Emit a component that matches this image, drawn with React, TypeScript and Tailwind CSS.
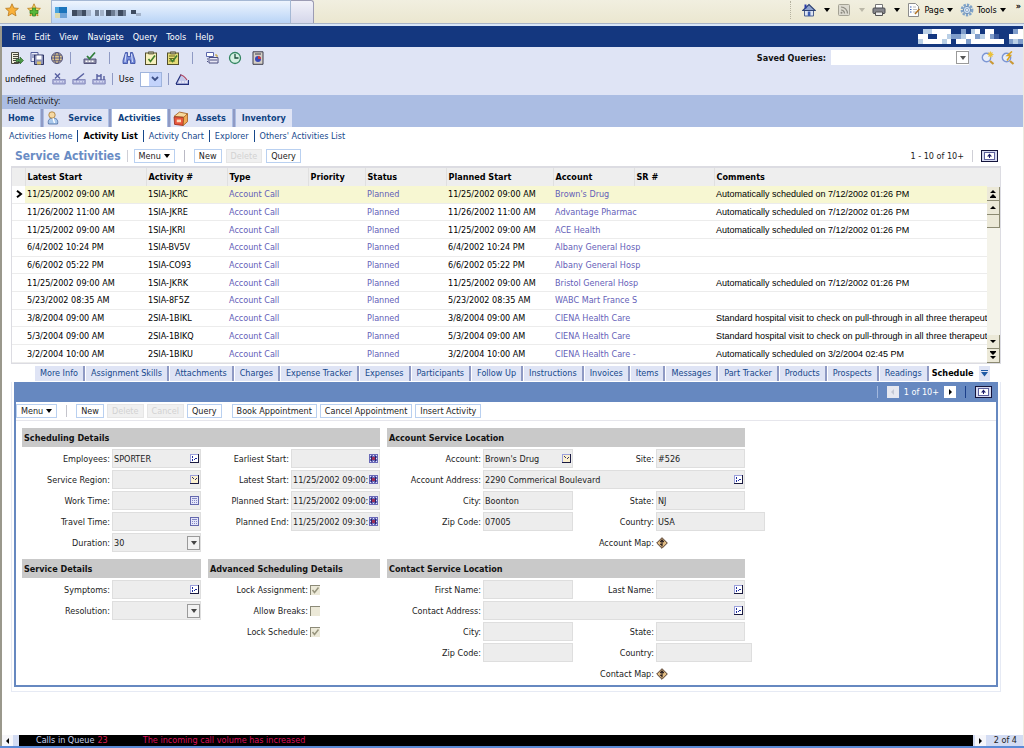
import { useId, type ReactNode } from 'react';
import clsx from 'clsx';

const ACTIVITIES = [
  ['11/25/2002 09:00 AM', '1SIA-JKRC', "Brown's Drug", 'Automatically scheduled on 7/12/2002 01:26 PM'],
  ['11/26/2002 11:00 AM', '1SIA-JKRE', 'Advantage Pharmac', 'Automatically scheduled on 7/12/2002 01:26 PM'],
  ['11/25/2002 09:00 AM', '1SIA-JKRI', 'ACE Health', 'Automatically scheduled on 7/12/2002 01:26 PM'],
  ['6/4/2002 10:24 PM', '1SIA-BV5V', 'Albany General Hosp', ''],
  ['6/6/2002 05:22 PM', '1SIA-CO93', 'Albany General Hosp', ''],
  ['11/25/2002 09:00 AM', '1SIA-JKRK', 'Bristol General Hosp', 'Automatically scheduled on 7/12/2002 01:26 PM'],
  ['5/23/2002 08:35 AM', '1SIA-8F5Z', 'WABC Mart France S', ''],
  ['3/8/2004 09:00 AM', '2SIA-1BIKL', 'CIENA Health Care', 'Standard hospital visit to check on pull-through in all three therapeutic'],
  ['5/3/2004 09:00 AM', '2SIA-1BIKQ', 'CIENA Health Care', 'Standard hospital visit to check on pull-through in all three therapeutic'],
  ['3/2/2004 10:00 AM', '2SIA-1BIKU', 'CIENA Health Care -', 'Automatically scheduled on 3/2/2004 02:45 PM'],
];

const VIEW_TABS = [
  'More Info', 'Assignment Skills', 'Attachments', 'Charges', 'Expense Tracker', 'Expenses', 'Participants',
  'Follow Up', 'Instructions', 'Invoices', 'Items', 'Messages', 'Part Tracker', 'Products', 'Prospects', 'Readings',
];

// one character per 5px cell: W white, L light, M mid, D dark blue
const LOGO = [
  '.LLWWWW..M.LW.WW....MW',
  'WW..WWLMMLWWMLWMD..WWW',
  'LWWWWLW.WWMWWWWWWW.MLM',
];
const LOGO_COLORS: Record<string, string> = { W: '#ffffff', L: '#b9cfe6', M: '#7f9dcb', D: '#3d5c9e' };

function Logo() {
  return (
    <svg width="105" height="15" viewBox="0 0 110 15" preserveAspectRatio="none" shapeRendering="crispEdges" aria-label="Logo">
      {LOGO.map((row, y) =>
        [...row].map((c, x) =>
          LOGO_COLORS[c] ? <rect key={`${x}-${y}`} x={x * 5} y={y * 5} width="5" height="5" fill={LOGO_COLORS[c]} /> : null,
        ),
      )}
    </svg>
  );
}

function Icon({ children, size = 14 }: { children: ReactNode; size?: number }) {
  return (
    <svg width={size} height={size} viewBox="0 0 14 14" fill="none" className="block shrink-0" aria-hidden="true">
      {children}
    </svg>
  );
}

const Star = ({ plus = false }: { plus?: boolean }) => (
  <Icon>
    <path d="M7 .8 8.9 5l4.5.4L10 8.4l1 4.500-4-2.400-4 2.400 1-4.500L.6 5.400 5.100 5z" fill={plus ? '#f8dc62' : '#f9b13a'} stroke="#b9791c" strokeWidth=".8" />
    {plus && <path d="M5.500 5h3v2.500H11v3H8.500V13h-3v-2.500H3v-3h2.500z" fill="#58b83c" stroke="#2c7d20" strokeWidth=".7" />}
  </Icon>
);
const HomeIcon = () => (
  <Icon>
    <path d="M2.500 6.500v6.500h9V6.500" fill="#dbe3f3" stroke="#4d608f" />
    <path d="M.8 7.500 7 1.500l6.200 6z" fill="#8fa3cf" stroke="#2e4274" strokeWidth="1.100" />
    <path d="M2.500 1.500h2v4h-2z" fill="#2b3da8" />
    <path d="M5.800 8.500h2.600V13H5.800z" fill="#3c5cb0" />
  </Icon>
);
const FeedIcon = () => (
  <Icon>
    <rect x="1.500" y="1.500" width="11" height="11" rx="1" fill="#dcdad0" stroke="#a4a294" />
    <path d="M4 7a3.500 3.500 0 0 1 3.500 3.500M4 4a6.500 6.500 0 0 1 6.500 6.500" stroke="#8c8a80" strokeWidth="1.200" />
    <circle cx="4.500" cy="9.800" r="1" fill="#8c8a80" />
  </Icon>
);
const PrinterIcon = () => (
  <Icon>
    <path d="M3.500 1.500h7v4h-7z" fill="#fff" stroke="#777" />
    <rect x="1" y="5" width="12" height="5.500" rx="1" fill="#85868c" stroke="#4a4b50" />
    <path d="M3.500 9h7v3.500h-7z" fill="#eee" stroke="#555" />
  </Icon>
);
const PageIcon = () => (
  <Icon>
    <path d="M1.500.5h7l3 3v10h-10z" fill="#fdfdfd" stroke="#8c8c8c" />
    <path d="M3 4h1.500M3 6.500h1.500M3 9h1.500" stroke="#3660b8" />
    <path d="M6 4h3M6 6.500h4M6 9h3" stroke="#bbb" />
    <path d="m8 11 4.500-5" stroke="#b57322" strokeWidth="1.500" />
  </Icon>
);
const GearIcon = () => (
  <Icon>
    <circle cx="7" cy="7" r="5.200" stroke="#7fa3c9" strokeWidth="2.400" strokeDasharray="2.300 1.100" />
    <circle cx="7" cy="7" r="3.700" fill="#cfe0f2" stroke="#6c8fb8" />
    <circle cx="7" cy="7" r="1.500" fill="#fff" stroke="#6c8fb8" strokeWidth=".7" />
  </Icon>
);
const ScriptIcon = () => (
  <Icon>
    <path d="M1.500 1.500h7v11h-7z" fill="#f1efdc" stroke="#4a4a40" />
    <path d="M3 3.500h5M3 5.500h5M3 7.500h5M3 9.500h5M4 11.500h6" stroke="#33332a" strokeWidth=".9" />
    <path d="M6 8.500h4V6l3.500 3.500L10 13v-2.500H6z" fill="#4e9a48" stroke="#1f5a22" strokeWidth=".6" />
  </Icon>
);
const CopyIcon = () => (
  <Icon>
    <path d="M1 1.500h7v9H1z" fill="#eceef8" stroke="#56619e" />
    <path d="M2 4h3M2 6h2" stroke="#56619e" />
    <path d="M4.500 4h9v9.500h-9z" fill="#8d92b8" stroke="#2f3565" />
    <path d="M6.500 4.500h5v4h-5z" fill="#fff" />
    <path d="M7 10.500h4v3H7z" fill="#d8c068" />
  </Icon>
);
const GlobeIcon = () => (
  <Icon>
    <circle cx="7" cy="7" r="5.500" fill="#e0c68c" stroke="#4b4f80" />
    <ellipse cx="7" cy="7" rx="2.500" ry="5.500" stroke="#4b4f80" strokeWidth=".9" />
    <path d="M1.500 7h11M2.500 4.200h9M2.500 9.800h9" stroke="#4b4f80" strokeWidth=".9" />
  </Icon>
);
const CheckCardIcon = () => (
  <Icon>
    <path d="M1 8h12v4.500H1z" fill="#8b8ba4" stroke="#55557d" />
    <path d="M2.500 10.300h9" stroke="#fff" strokeWidth="1.400" strokeDasharray="2 1" />
    <path d="m4 5 2.500 2.700L12 1.500" stroke="#2f7d3a" strokeWidth="1.700" />
  </Icon>
);
const BinocularsIcon = () => (
  <Icon>
    <path d="M3.500 1.500h2v4h3v-4h2l2.500 8v3H8.500V9h-3v3.500H1v-3z" fill="#7389d8" stroke="#3448a0" strokeWidth=".8" />
    <path d="M4 3 3 11M9.500 3l1 8" stroke="#dbe3fc" />
  </Icon>
);
const ClipboardIcon = ({ lines = false }: { lines?: boolean }) => (
  <Icon>
    <rect x="1.500" y="2" width="11" height="11.500" fill={lines ? '#e4dc78' : '#f7f1be'} stroke="#54502c" />
    <path d="M4.500.8h5V3h-5z" fill="#9b9a84" stroke="#54502c" strokeWidth=".7" />
    {lines && <path d="M3 5h6M3 7.500h5M3 10h6" stroke="#6d681e" />}
    <path d="m4.500 8 2 2.500L11 4.500" stroke="#3f7d2a" strokeWidth="1.600" />
  </Icon>
);
const FaxIcon = () => (
  <Icon>
    <path d="M1.500 1.500h7v4h-7z" fill="#fff" stroke="#5a66ac" />
    <path d="M4 6.500h9v5.500H4z" fill="#e7e6f4" stroke="#4a4f80" />
    <path d="M5 9h7M2 8h1M2 10.500h1" stroke="#4a4f80" />
    <path d="M10 4h2v2" stroke="#c09c30" />
  </Icon>
);
const ClockIcon = () => (
  <Icon>
    <circle cx="7" cy="7" r="5.500" fill="#d5f0e2" stroke="#338561" strokeWidth="1.300" />
    <path d="M7 3v4h3.500" stroke="#1c4d3c" strokeWidth="1.300" />
  </Icon>
);
const ReportIcon = () => (
  <Icon>
    <path d="M2 .8h10v12.500H2z" fill="#d5cfc6" stroke="#3d3d4d" />
    <path d="M4 3h6" stroke="#3d3d4d" />
    <circle cx="7" cy="8" r="3" fill="#3a49b5" />
    <path d="M7 8V5a3 3 0 0 1 3 3z" fill="#d03c3c" />
  </Icon>
);
const KeysIcon = ({ d }: { d: string }) => (
  <Icon>
    <path d="M.8 7.500h12.400v4.500H.8z" fill="#a9add6" stroke="#8a8fc0" />
    <path d="M2 9.800h10" stroke="#e6e8fa" strokeDasharray="2 1" />
    <path d={d} stroke="#565ea0" strokeWidth="1.400" />
  </Icon>
);
const SlopeIcon = () => (
  <Icon>
    <path d="M1 12 6.500 2l1 2.500 5.500 5V12z" fill="#c4c8ea" />
    <path d="M1 12.300h12.500V8M1 12 6 2.500" stroke="#23307c" strokeWidth="1.200" />
    <path d="M5 3c3 0 5 2 7 5" stroke="#b04560" strokeWidth="1.200" />
    <path d="M4 10h8" stroke="#fff" strokeDasharray="2 1" />
  </Icon>
);
const SearchIcon = ({ bolt = false }: { bolt?: boolean }) => (
  <Icon>
    <circle cx="5.500" cy="6.500" r="4.200" fill="#e9effb" stroke="#7c96d4" strokeWidth="1.400" />
    <path d="m9 10 3.500 3" stroke="#c99836" strokeWidth="2.200" />
    {bolt ? (
      <path d="M11 .5 6.500 4.500h3L6 9.500" stroke="#dba51f" strokeWidth="1.600" />
    ) : (
      <path d="M9.500.5v6M6.500 3.500h6M7.500 1.500l4 4m0-4-4 4" stroke="#eac13c" strokeWidth="1.100" />
    )}
  </Icon>
);
const PersonIcon = () => (
  <Icon>
    <path d="M2.500 13c-1-4 1-6 4.500-6s5.500 2 4.500 6z" fill="#a9c8ec" stroke="#47689e" strokeWidth=".8" />
    <circle cx="6" cy="4" r="3.200" fill="#f6d9a4" stroke="#a5762f" strokeWidth=".8" />
    <path d="m7 7 1.500 5" stroke="#fff" strokeWidth="1.300" />
  </Icon>
);
const CrateIcon = () => (
  <Icon size={15}>
    <path d="m1 5 5-4 7.500 1.500L12 6z" fill="#f7d89c" stroke="#a35f22" strokeWidth=".8" />
    <path d="M1 5.500 10 6l-.5 7.500-8-1z" fill="#e8553c" stroke="#9c2f1c" strokeWidth=".8" />
    <path d="m10 6 3.500-3.500V10l-4 3.500z" fill="#f2ae58" stroke="#a35f22" strokeWidth=".8" />
    <path d="M3.500 8h4v2.500h-4z" fill="#fbd9b8" />
  </Icon>
);

function Caret({ className = 'text-black' }: { className?: string }) {
  return (
    <svg width="6" height="4" viewBox="0 0 6 4" className={clsx('inline-block shrink-0', className)} aria-hidden="true">
      <path d="M0 0h6L3 4z" fill="currentColor" />
    </svg>
  );
}

function ToolButton({ label, children }: { label: string; children: ReactNode }) {
  return (
    <button type="button" aria-label={label} className="block">
      {children}
    </button>
  );
}

const Divider = ({ className = 'bg-[#8f9ac4]' }: { className?: string }) => <span className={clsx('h-3 w-px shrink-0', className)} />;

function Button({ children, disabled = false }: { children: ReactNode; disabled?: boolean }) {
  return (
    <button
      type="button"
      disabled={disabled}
      className={clsx(
        'flex h-[14px] items-center gap-[3px] border px-1 leading-[12px] whitespace-nowrap',
        disabled ? 'border-[#e6e6e6] bg-[#f0f0f0] text-[#d2d2d2]' : 'border-[#b9d0f0] bg-white text-[#222]',
      )}
    >
      {children}
    </button>
  );
}

function ExpandButton() {
  return (
    <button type="button" aria-label="Expand" className="grid h-3 w-[17px] place-items-center border border-[#14143c] bg-[#d6daf0]">
      <svg width="11" height="8" viewBox="0 0 11 8" aria-hidden="true">
        <rect x=".5" y=".5" width="10" height="7" fill="#fff" stroke="#5c5f9c" />
        <path d="M5.500 1.500 8 4.500H6V6H5V4.500H3z" fill="#1e1e6a" />
      </svg>
    </button>
  );
}

type FieldIcon = 'pick' | 'mvg' | 'calc' | 'cal';

function FieldGlyph({ kind }: { kind: FieldIcon }) {
  if (kind === 'cal') {
    return (
      <svg width="9" height="9" viewBox="0 0 9 9" className="block" shapeRendering="crispEdges" aria-hidden="true">
        <rect width="9" height="9" fill="#6a6ab8" />
        <path d="M1 1h1v1H1zM4 1h1v1H4zM7 1h1v1H7zM1 4h1v1H1zM7 4h1v1H7zM1 7h1v1H1zM4 7h1v1H4zM7 7h1v1H7z" fill="#e4e4fa" />
        <path d="M2 2h1v5H2zM6 2h1v5H6z" fill="#24246e" />
        <path d="M3 3h3v3H3z" fill="#a03058" />
      </svg>
    );
  }
  if (kind === 'calc') {
    return (
      <svg width="9" height="9" viewBox="0 0 9 9" className="block" aria-hidden="true">
        <rect x=".5" y=".5" width="8" height="8" fill="#e4e6fa" stroke="#6468ae" />
        <path d="M2 2.500h5M2 4.500h1m1 0h1m1 0h1M2 6.500h1m1 0h1m1 0h1" stroke="#8387c4" />
      </svg>
    );
  }
  return (
    <svg width="9" height="9" viewBox="0 0 9 9" className="block" shapeRendering="crispEdges" aria-hidden="true">
      <rect width="9" height="9" fill="#9ba0dc" />
      <rect x="1" y="1" width="7" height="7" fill={kind === 'pick' ? '#fbf0cf' : '#fff'} />
      <path d="M0 8h9v1H0zM8 0h1v9H8z" fill="#1b1b40" />
      {kind === 'pick' ? (
        <path d="M2 2h1v1H2zM3 3h1v1H3zM5 4h1v1H5zM6 3h1v1H6z" fill="#33336c" />
      ) : (
        <path d="M2 2h1v2H2zM2 5h1v2H2zM4 5h1v1H4zM5 4h2v1H5z" fill="#1f2ea0" />
      )}
    </svg>
  );
}

interface FieldProps {
  label: string;
  value?: string;
  icon?: FieldIcon;
  select?: boolean;
  className?: string;
}

function Field({ label, value = '', icon, select = false, className }: FieldProps) {
  const id = useId();
  return (
    <>
      <label htmlFor={id} className="pr-[2px] text-right whitespace-nowrap">
        {label}:
      </label>
      <div className={clsx('relative flex h-[19px] items-center border border-[#dedede] bg-[#ededed]', className)}>
        {select ? (
          <>
            <select id={id} defaultValue={value} className="h-full w-full appearance-none bg-transparent pl-px">
              <option>{value}</option>
            </select>
            <span className="pointer-events-none absolute right-0 grid h-[14px] w-[13px] place-items-center border border-[#9a9a9a] bg-[#f2f2f2]">
              <Caret className="text-[#444]" />
            </span>
          </>
        ) : (
          <input id={id} defaultValue={value} className="h-full w-full min-w-0 flex-1 bg-transparent pl-px outline-none" />
        )}
        {icon && (
          <button type="button" aria-label={`Choose ${label}`} className="mr-px shrink-0">
            <FieldGlyph kind={icon} />
          </button>
        )}
      </div>
    </>
  );
}

function MapField({ label }: { label: string }) {
  const id = useId();
  return (
    <>
      <label htmlFor={id} className="col-start-3 pr-[2px] text-right whitespace-nowrap">
        {label}:
      </label>
      <button id={id} type="button" aria-label={label} className="w-3">
        <svg width="12" height="12" viewBox="0 0 12 12" className="block" aria-hidden="true">
          <path d="m6 .7 5.300 5.300L6 11.300.7 6z" fill="#e2bd84" stroke="#4a3528" />
          <path d="M6 9.500v-6M4.200 5 6 3l1.800 2M4 7l2 1" stroke="#2c2020" strokeWidth="1.200" fill="none" />
        </svg>
      </button>
    </>
  );
}

function CheckField({ label, checked = false }: { label: string; checked?: boolean }) {
  const id = useId();
  return (
    <div className="grid h-[21px] grid-cols-[100px_1fr] items-center gap-x-[2px]">
      <label htmlFor={id} className="text-right whitespace-nowrap">
        {label}:
      </label>
      <span className="relative h-[10px] w-[10px]">
        <input
          id={id}
          type="checkbox"
          disabled
          defaultChecked={checked}
          className="block h-[10px] w-[10px] appearance-none border-t border-l border-[#8c8a78] bg-[#ece9d8]"
        />
        {checked && (
          <svg viewBox="0 0 10 10" className="pointer-events-none absolute inset-0" aria-hidden="true">
            <path d="m2.500 5 2 2.500L8.500 2.500" stroke="#98957e" strokeWidth="1.500" fill="none" />
          </svg>
        )}
      </span>
    </div>
  );
}

const SectionTitle = ({ children }: { children: ReactNode }) => (
  <h3 className="mb-px flex h-[19px] items-center bg-[#c9c9c9] pl-[2px] font-bold text-[#111]">{children}</h3>
);

function BrowserBar() {
  return (
    <div className="flex h-[23px] items-stretch bg-gradient-to-b from-[#f1efe0] to-[#ebe7d0]">
      <div className="flex w-[51px] items-start gap-2 pt-[3px] pl-[5px]">
        <ToolButton label="Favorites"><Star /></ToolButton>
        <ToolButton label="Add favorite"><Star plus /></ToolButton>
      </div>
      <div className="flex w-[240px] items-center border-x border-t border-[#a5b8d4] bg-gradient-to-b from-[#eef5fe] to-[#b9d4f6] pl-[3px]">
        <svg width="110" height="14" viewBox="0 0 110 14" shapeRendering="crispEdges" aria-hidden="true">
          <path d="M0 2h9v6H0z" fill="#4aa5de" />
          <path d="M4 2h8v6H4z" fill="#1b74bc" />
          <path d="M0 8h5v5H0z" fill="#d9d9b0" />
          <path d="M5 8h7v5H5z" fill="#6fa3d8" />
          <path d="M17 5h5v6h-5zM27 5h4v6h-4zM51 5h5v6h-5zM63 5h5v6h-5zM76 5h5v4h-5z" fill="#3f4c60" />
          <path d="M22 5h5v6h-5zM40 5h4v6h-4zM56 5h4v6h-4zM68 5h3v6h-3z" fill="#6d7c92" />
          <path d="M31 5h5v6h-5zM45 5h4v6h-4zM60 5h3v6h-3zM81 8h5v3h-5z" fill="#a3b3ca" />
        </svg>
      </div>
      <div className="w-[23px] rounded-tr-[3px] border-t border-r border-[#9c9cb4] bg-gradient-to-b from-[#f2f2fa] to-[#d5d7ea]" />
      <div className="ml-auto flex items-center gap-[7px] pr-[3px] pb-[3px] text-black">
        <span className="h-[18px] border-l border-dotted border-[#b5b2a0]" />
        <div className="flex items-center gap-2 pl-1"><ToolButton label="Home page"><HomeIcon /></ToolButton><Caret /></div>
        <div className="flex items-center gap-2"><ToolButton label="Feeds"><FeedIcon /></ToolButton><Caret className="text-[#bbb8a8]" /></div>
        <div className="flex items-center gap-2"><ToolButton label="Print"><PrinterIcon /></ToolButton><Caret /></div>
        <button type="button" className="flex items-center gap-[3px]"><PageIcon />Page<Caret /></button>
        <button type="button" className="flex items-center gap-[3px]"><GearIcon />Tools<Caret /></button>
        <span className="self-start pl-[3px] font-bold">»</span>
      </div>
    </div>
  );
}

function Toolbars() {
  return (
    <div className="flex h-12 justify-between bg-[#dfe4f5]">
      <div>
        <div className="flex h-[22px] items-center gap-[6px] pl-2">
          <ToolButton label="Script"><ScriptIcon /></ToolButton>
          <ToolButton label="Copy"><CopyIcon /></ToolButton>
          <ToolButton label="Web"><GlobeIcon /></ToolButton>
          <Divider />
          <div className="px-[6px]"><ToolButton label="Spelling"><CheckCardIcon /></ToolButton></div>
          <Divider />
          <div className="flex gap-2 px-[6px]">
            <ToolButton label="Find"><BinocularsIcon /></ToolButton>
            <ToolButton label="Check"><ClipboardIcon /></ToolButton>
            <ToolButton label="Checklist"><ClipboardIcon lines /></ToolButton>
          </div>
          <Divider />
          <div className="flex gap-[9px] px-[6px]">
            <ToolButton label="Fax"><FaxIcon /></ToolButton>
            <ToolButton label="History"><ClockIcon /></ToolButton>
            <ToolButton label="Reports"><ReportIcon /></ToolButton>
          </div>
        </div>
        <div className="flex h-[20px] items-center gap-[6px] pl-[3px]">
          <span className="text-black">undefined</span>
          <ToolButton label="New query"><KeysIcon d="M3 1.500l5 5m0-5-5 5" /></ToolButton>
          <ToolButton label="Edit query"><KeysIcon d="M4 8 12 1.500" /></ToolButton>
          <ToolButton label="Find query"><KeysIcon d="M5 8V2m4 6V2m3 6V4M5 4h4" /></ToolButton>
          <Divider />
          <label htmlFor="use" className="text-black">Use</label>
          <span className="relative flex">
            <select id="use" className="h-[15px] w-[22px] appearance-none border border-[#9fb4dc] bg-white"><option></option></select>
            <span className="pointer-events-none absolute top-[1px] right-[1px] grid h-[13px] w-3 place-items-center bg-[#c3d3fb]">
              <svg width="8" height="6" viewBox="0 0 8 6" aria-hidden="true"><path d="m1 1 3 3 3-3" stroke="#3c4f86" strokeWidth="1.800" fill="none" /></svg>
            </span>
          </span>
          <Divider />
          <ToolButton label="Chart"><SlopeIcon /></ToolButton>
        </div>
      </div>
      <div className="flex h-[21px] items-center pr-2">
        <label htmlFor="saved" className="pr-[5px] font-bold text-[#111]">Saved Queries:</label>
        <span className="relative flex items-center">
          <select id="saved" className="h-[15px] w-[138px] appearance-none bg-white"><option></option></select>
          <span className="pointer-events-none absolute right-0 grid h-[13px] w-[13px] place-items-center border border-[#9a9a9a] bg-white">
            <Caret className="text-[#555]" />
          </span>
        </span>
        <div className="ml-3 flex gap-[6px]">
          <ToolButton label="New search"><SearchIcon /></ToolButton>
          <ToolButton label="Run search"><SearchIcon bolt /></ToolButton>
        </div>
      </div>
    </div>
  );
}

function ScreenTabs() {
  const tab = 'flex h-[18px] items-center gap-2 bg-[#dfe4f5]';
  const line = 'w-[2px] bg-[#8f9ac4]';
  return (
    <div className="bg-[#abbde3]">
      <div className="h-[14px] pl-[5px] leading-[12px] text-[#222]">Field Activity:</div>
      <nav className="flex gap-px font-bold text-[#0f4382]">
        <a href="#home" className={clsx(tab, 'px-[6px]')}>Home</a>
        <span className={line} />
        <a href="#service" className={clsx(tab, 'pr-[6px] pl-[2px]')}><PersonIcon />Service</a>
        <span className={line} />
        <a href="#activities" className="flex h-[18px] items-center bg-white px-[6px]">Activities</a>
        <span className={line} />
        <a href="#assets" className={clsx(tab, 'pr-[6px] pl-[2px]')}><CrateIcon />Assets</a>
        <span className={line} />
        <a href="#inventory" className={clsx(tab, 'px-[6px]')}>Inventory</a>
      </nav>
    </div>
  );
}

function ScrollButton({ label, d }: { label: string; d: string }) {
  return (
    <button type="button" aria-label={label} className="grid h-[14px] place-items-center border-r border-b border-[#8c8a72] bg-[#ece9d8]">
      <svg width="8" height="9" viewBox="0 0 8 9" aria-hidden="true"><path d={d} fill="#000" /></svg>
    </button>
  );
}

function ActivityTable() {
  const cell = 'pl-[2px] whitespace-nowrap';
  const headers = ['Latest Start', 'Activity #', 'Type', 'Priority', 'Status', 'Planned Start', 'Account', 'SR #', 'Comments'];
  return (
    <div className="flex border border-t-2 border-[#dcdce2]">
      <div className="min-w-0 flex-1">
        <table className="h-[195px] w-full table-fixed border-collapse text-left">
          <colgroup>
            <col className="w-[13px]" />
            <col className="w-[121px]" />
            <col className="w-[81px]" />
            <col className="w-[81px]" />
            <col className="w-[57px]" />
            <col className="w-[81px]" />
            <col className="w-[107px]" />
            <col className="w-[81px]" />
            <col className="w-[80px]" />
            <col />
          </colgroup>
          <thead>
            <tr className="h-[18px] bg-[#eeeeee] text-black">
              <th aria-label="Selected" />
              {headers.map((h) => (
                <th key={h} className={clsx(cell, 'border-l border-[#e0e0e0] font-bold')}>{h}</th>
              ))}
            </tr>
          </thead>
          <tbody>
            {ACTIVITIES.map(([start, id, account, comment], i) => (
              <tr key={id} className={clsx('border-b border-[#ececec] text-black', i === 0 && 'bg-[#f7f7d2]')}>
                <td className="bg-white">
                  {i === 0 && (
                    <svg width="7" height="8" viewBox="0 0 7 8" className="ml-1" aria-hidden="true">
                      <path d="m1 .8 4 3.200-4 3.200" stroke="#000" strokeWidth="2" fill="none" />
                    </svg>
                  )}
                </td>
                <td className={cell}>{start}</td>
                <td className={cell}>{id}</td>
                <td className={cell}><a href="#type" className="text-[#6460b8]">Account Call</a></td>
                <td />
                <td className={clsx(cell, 'text-[#6460b8]')}>Planned</td>
                <td className={cell}>{start}</td>
                <td className={cell}><a href="#account" className="text-[#6460b8]">{account}</a></td>
                <td />
                <td className={clsx(cell, "font-['Liberation_Sans',Arial,sans-serif]")}>{comment}</td>
              </tr>
            ))}
          </tbody>
        </table>
      </div>
      <div className="flex w-[13px] flex-col bg-[#f4f3ea]">
        <div className="h-[19px] bg-[#eeeeee]" />
        <ScrollButton label="First" d="M1 4 4 1l3 3zM1 8l3-3 3 3zM1 8h6v1H1z" />
        <ScrollButton label="Up" d="M1 6l3-3 3 3z" />
        <div className="h-[13px] border-r border-b border-[#8c8a72] bg-[#ece9d8]" />
        <div className="flex-1" />
        <ScrollButton label="Down" d="M1 3l3 3 3-3z" />
        <ScrollButton label="Last" d="M1 0h6v1H1zM1 1l3 3 3-3zM1 5l3 3 3-3z" />
      </div>
    </div>
  );
}

function ViewTabs() {
  return (
    <nav className="flex h-[18px] items-center pl-6 text-[#16488c]">
      {VIEW_TABS.map((t) => (
        <a key={t} href="#view" className="mr-px flex h-[15px] items-center border-r-2 border-[#8f9ac4] bg-[#dfe4f5] px-[5px] whitespace-nowrap">
          {t}
        </a>
      ))}
      <a href="#view" className="flex h-[15px] items-center px-[2px] font-bold text-black">Schedule</a>
      <button type="button" aria-label="More views" className="ml-1 grid h-[15px] w-[11px] place-items-center bg-[#dfe4f5]">
        <svg width="7" height="7" viewBox="0 0 7 7" aria-hidden="true"><path d="M0 0h7v1H0zM0 2h7L3.500 6.500z" fill="#1f5aa5" /></svg>
      </button>
    </nav>
  );
}

function DetailForm() {
  return (
    <div className="flex flex-wrap gap-x-[7px] px-[6px] pt-[7px] pb-px text-[#222]">
      <div className="w-[358px]">
        <SectionTitle>Scheduling Details</SectionTitle>
        <div className="grid auto-rows-[21px] grid-cols-[90px_89px_90px_89px] items-center">
          <Field label="Employees" value="SPORTER" icon="mvg" />
          <Field label="Earliest Start" icon="cal" />
          <Field label="Service Region" icon="pick" />
          <Field label="Latest Start" value="11/25/2002 09:00:" icon="cal" />
          <Field label="Work Time" icon="calc" />
          <Field label="Planned Start" value="11/25/2002 09:00:" icon="cal" />
          <Field label="Travel Time" icon="calc" />
          <Field label="Planned End" value="11/25/2002 09:30:" icon="cal" />
          <Field label="Duration" value="30" select />
        </div>
        <div className="mt-[6px] flex gap-[7px]">
          <div className="w-[179px]">
            <SectionTitle>Service Details</SectionTitle>
            <div className="grid auto-rows-[21px] grid-cols-[90px_89px] items-center">
              <Field label="Symptoms" icon="mvg" />
              <Field label="Resolution" select />
            </div>
          </div>
          <div className="flex-1">
            <SectionTitle>Advanced Scheduling Details</SectionTitle>
            <CheckField label="Lock Assignment" checked />
            <CheckField label="Allow Breaks" />
            <CheckField label="Lock Schedule" checked />
          </div>
        </div>
      </div>
      <div className="w-[358px]">
        <SectionTitle>Account Service Location</SectionTitle>
        <div className="grid auto-rows-[21px] grid-cols-[96px_90px_83px_89px] items-center">
          <Field label="Account" value="Brown's Drug" icon="pick" />
          <Field label="Site" value="#526" />
          <Field label="Account Address" value="2290 Commerical Boulevard" icon="mvg" className="col-span-3" />
          <Field label="City" value="Boonton" />
          <Field label="State" value="NJ" />
          <Field label="Zip Code" value="07005" />
          <Field label="Country" value="USA" className="w-[109px]" />
          <MapField label="Account Map" />
        </div>
        <div className="mt-[6px]">
          <SectionTitle>Contact Service Location</SectionTitle>
          <div className="grid auto-rows-[21px] grid-cols-[96px_90px_83px_89px] items-center">
            <Field label="First Name" />
            <Field label="Last Name" icon="mvg" />
            <Field label="Contact Address" icon="mvg" className="col-span-3" />
            <Field label="City" />
            <Field label="State" />
            <Field label="Zip Code" />
            <Field label="Country" className="w-[96px]" />
            <MapField label="Contact Map" />
          </div>
        </div>
      </div>
    </div>
  );
}

export default function App() {
  return (
    <div className="flex min-h-screen flex-col bg-white font-['DejaVu_Sans_Condensed','DejaVu_Sans',sans-serif] text-[9px] leading-[12px]">
      <BrowserBar />
      <div className="h-[3px] border-t border-[#a8b4c8] bg-[#d9e6f8]" />
      <div className="flex flex-1 flex-col border-r border-l-2 border-r-[#eceade] border-l-[#9a988c]">
        <header>
          <div className="flex h-[21px] items-center justify-between bg-[#14377f] text-white">
            <nav className="flex gap-[9px] pl-[10px]">
              {['File', 'Edit', 'View', 'Navigate', 'Query', 'Tools', 'Help'].map((m) => (
                <button key={m} type="button">{m}</button>
              ))}
            </nav>
            <Logo />
          </div>
          <Toolbars />
          <ScreenTabs />
        </header>

        <nav className="flex h-[17px] items-center gap-[5px] pl-[7px] text-[#16488c]">
          <a href="#activities-home">Activities Home</a>
          <Divider className="bg-[#16488c]" />
          <a href="#activity-list" className="font-bold text-black">Activity List</a>
          <Divider className="bg-[#16488c]" />
          <a href="#activity-chart">Activity Chart</a>
          <Divider className="bg-[#16488c]" />
          <a href="#explorer">Explorer</a>
          <Divider className="bg-[#16488c]" />
          <a href="#others">Others' Activities List</a>
        </nav>

        <main className="flex-1 pr-[22px] pl-[9px]">
          <div className="flex h-[22px] items-center gap-1 pt-[2px] pr-[3px] pl-1">
            <h2 className="text-[12px] font-bold text-[#6a8cc4]">Service Activities</h2>
            <Divider className="mx-[2px] bg-[#cfcfd6]" />
            <Button>Menu <Caret /></Button>
            <Divider className="mx-[5px] bg-[#b9b9c4]" />
            <Button>New</Button>
            <Button disabled>Delete</Button>
            <Button>Query</Button>
            <span className="ml-auto text-[#222]">1 - 10 of 10+</span>
            <Divider className="mx-1 bg-[#cfcfd6]" />
            <ExpandButton />
          </div>
          <ActivityTable />
          <ViewTabs />
          <section className="border border-t-0 border-[#e6eaf4] px-[2px] pb-1">
            <div className="border-2 border-t-0 border-[#6688c0]">
              <div className="flex h-[20px] items-center justify-end gap-[5px] bg-[#6688c0] pr-1 text-white">
                <Divider className="mr-1 bg-[#a3b8de]" />
                <button type="button" aria-label="Previous" disabled className="grid h-3 w-3 place-items-center bg-[#e6e8f0]">
                  <svg width="5" height="6" viewBox="0 0 5 6" aria-hidden="true"><path d="M4 0v6L1 3z" fill="#c4c8d4" /></svg>
                </button>
                <span>1 of 10+</span>
                <button type="button" aria-label="Next" className="grid h-3 w-3 place-items-center bg-white">
                  <svg width="5" height="6" viewBox="0 0 5 6" aria-hidden="true"><path d="M1 0v6l3-3z" fill="#000" /></svg>
                </button>
                <Divider className="mx-1 bg-[#1c3f8a]" />
                <ExpandButton />
              </div>
              <div className="flex h-[19px] items-center gap-[3px] border-b border-[#e6e6ec]">
                <Button>Menu <Caret /></Button>
                <Divider className="mx-[6px] bg-[#c4c4cc]" />
                <Button>New</Button>
                <Button disabled>Delete</Button>
                <Button disabled>Cancel</Button>
                <Button>Query</Button>
                <span className="w-1" />
                <Button>Book Appointment</Button>
                <Button>Cancel Appointment</Button>
                <Button>Insert Activity</Button>
              </div>
              <DetailForm />
            </div>
          </section>
        </main>

        <footer className="flex h-[11px] items-stretch bg-[#d3dcf3]">
          <button type="button" aria-label="Previous message" className="grid w-[11px] place-items-center bg-[#f6f6fa]">
            <svg width="5" height="6" viewBox="0 0 5 6" aria-hidden="true"><path d="M4 0v6L1 3z" fill="#000" /></svg>
          </button>
          <div className="ml-[6px] flex flex-1 items-center bg-black pl-[17px] leading-[11px]">
            <span className="text-[#c6d4f2]">Calls in Queue</span>
            <span className="ml-[3px] text-[#d81e50]">23</span>
            <span className="ml-[35px] text-[#d8105a]">The incoming call volume has increased</span>
          </div>
          <button type="button" aria-label="Next message" className="mx-[2px] grid w-[11px] place-items-center bg-[#f6f6fa]">
            <svg width="5" height="6" viewBox="0 0 5 6" aria-hidden="true"><path d="M1 0v6l3-3z" fill="#000" /></svg>
          </button>
          <span className="px-[6px] leading-[11px] text-[#222]">2 of 4</span>
        </footer>
      </div>
      <div className="h-[2px] bg-[#5b8ad6]" />
    </div>
  );
}
